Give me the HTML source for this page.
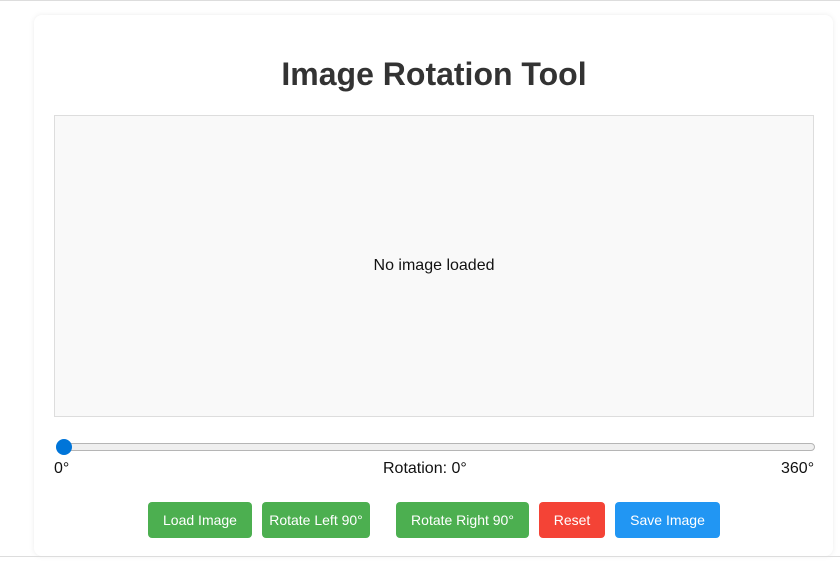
<!DOCTYPE html>
<html><head><meta charset="utf-8"><style>
*{box-sizing:border-box;margin:0;padding:0}
html,body{width:840px;height:564px;overflow:hidden;background:#fff;font-family:"Liberation Sans",Arial,sans-serif;position:relative}
.top{position:absolute;left:0;top:0;width:840px;height:1px;background:#ddd}
.bot{position:absolute;left:0;top:556px;width:840px;height:1px;background:#ddd}
.card{position:absolute;left:34px;top:15px;width:799px;height:541px;background:#fff;border-radius:8px;box-shadow:0 0 6px rgba(0,0,0,.08)}
h1{position:absolute;left:34px;width:800px;top:55px;text-align:center;font-size:32px;font-weight:bold;color:#333;line-height:38px}
.box{position:absolute;left:54px;top:115px;width:760px;height:302px;background:#f9f9f9;border:1px solid #ddd;display:flex;align-items:center;justify-content:center;font-size:16px;color:#111}
.track{position:absolute;left:56px;top:443px;width:759px;height:8px;background:#efefef;border:1px solid #b5b5b5;border-radius:4px}
.thumb{position:absolute;left:56px;top:439px;width:16px;height:16px;border-radius:50%;background:#0075d9}
.lab{position:absolute;top:460px;font-size:16px;color:#111;line-height:18px}
.btns{position:absolute;top:502px;left:148px;display:flex;gap:10px}
.b{height:36px;padding:0;white-space:nowrap;border-radius:4px;color:#fff;font-size:14px;display:flex;align-items:center;justify-content:center;background:#4caf50}
</style></head><body>
<div class="top"></div>
<div class="card"></div>
<div class="bot"></div>
<h1>Image Rotation Tool</h1>
<div class="box">No image loaded</div>
<div class="track"></div>
<div class="thumb"></div>
<div class="lab" style="left:54px">0°</div>
<div class="lab" style="left:383px">Rotation: 0°</div>
<div class="lab" style="left:781px">360°</div>
<div class="btns">
<div class="b" style="width:104px">Load Image</div>
<div class="b" style="width:108px">Rotate Left 90°</div>
<div class="b" style="width:133px;margin-left:16px">Rotate Right 90°</div>
<div class="b" style="width:66px;background:#f44336">Reset</div>
<div class="b" style="width:105px;background:#2196f3">Save Image</div>
</div>
</body></html>
